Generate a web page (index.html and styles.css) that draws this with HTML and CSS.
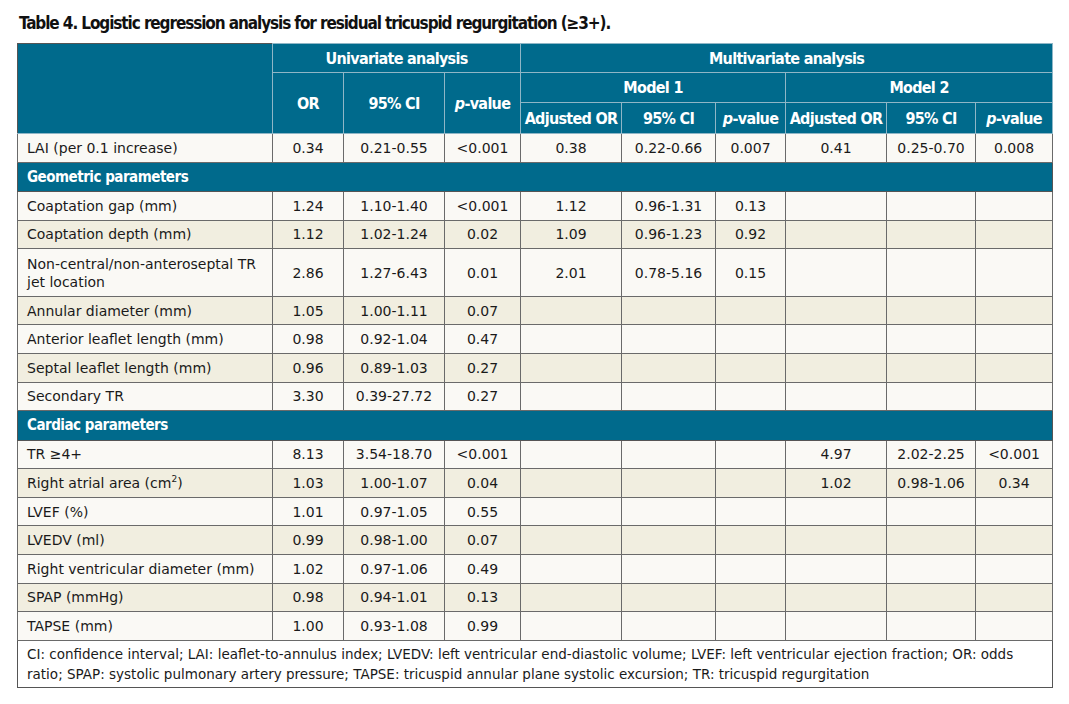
FILE: index.html
```html
<!DOCTYPE html>
<html>
<head>
<meta charset="utf-8">
<link rel="stylesheet" href="styles.css">
</head>
<body>
<div class="page">
  <h1 class="title">Table 4. Logistic regression analysis for residual tricuspid regurgitation (≥3+).</h1>
  <table class="tbl">
    <colgroup>
      <col class="c-label"><col class="c-or"><col class="c-ci"><col class="c-p">
      <col class="c-aor"><col class="c-ci2"><col class="c-p2">
      <col class="c-aor3"><col class="c-ci3"><col class="c-p3">
    </colgroup>
    <thead>
      <tr class="h1">
        <th rowspan="3"></th>
        <th colspan="3">Univariate analysis</th>
        <th colspan="6">Multivariate analysis</th>
      </tr>
      <tr class="h2">
        <th rowspan="2">OR</th>
        <th rowspan="2">95% CI</th>
        <th rowspan="2"><i>p</i>-value</th>
        <th colspan="3">Model 1</th>
        <th colspan="3">Model 2</th>
      </tr>
      <tr class="h3">
        <th>Adjusted OR</th><th>95% CI</th><th><i>p</i>-value</th>
        <th>Adjusted OR</th><th>95% CI</th><th><i>p</i>-value</th>
      </tr>
    </thead>
    <tbody>
      <tr class="odd"><td class="lbl">LAI (per 0.1 increase)</td><td>0.34</td><td>0.21-0.55</td><td>&lt;0.001</td><td>0.38</td><td>0.22-0.66</td><td>0.007</td><td>0.41</td><td>0.25-0.70</td><td>0.008</td></tr>
      <tr class="sec"><th colspan="10">Geometric parameters</th></tr>
      <tr class="odd"><td class="lbl">Coaptation gap (mm)</td><td>1.24</td><td>1.10-1.40</td><td>&lt;0.001</td><td>1.12</td><td>0.96-1.31</td><td>0.13</td><td></td><td></td><td></td></tr>
      <tr class="even"><td class="lbl">Coaptation depth (mm)</td><td>1.12</td><td>1.02-1.24</td><td>0.02</td><td>1.09</td><td>0.96-1.23</td><td>0.92</td><td></td><td></td><td></td></tr>
      <tr class="odd tall"><td class="lbl">Non-central/non-anteroseptal TR jet location</td><td>2.86</td><td>1.27-6.43</td><td>0.01</td><td>2.01</td><td>0.78-5.16</td><td>0.15</td><td></td><td></td><td></td></tr>
      <tr class="even"><td class="lbl">Annular diameter (mm)</td><td>1.05</td><td>1.00-1.11</td><td>0.07</td><td></td><td></td><td></td><td></td><td></td><td></td></tr>
      <tr class="odd"><td class="lbl">Anterior leaflet length (mm)</td><td>0.98</td><td>0.92-1.04</td><td>0.47</td><td></td><td></td><td></td><td></td><td></td><td></td></tr>
      <tr class="even"><td class="lbl">Septal leaflet length (mm)</td><td>0.96</td><td>0.89-1.03</td><td>0.27</td><td></td><td></td><td></td><td></td><td></td><td></td></tr>
      <tr class="odd"><td class="lbl">Secondary TR</td><td>3.30</td><td>0.39-27.72</td><td>0.27</td><td></td><td></td><td></td><td></td><td></td><td></td></tr>
      <tr class="sec"><th colspan="10">Cardiac parameters</th></tr>
      <tr class="odd"><td class="lbl">TR ≥4+</td><td>8.13</td><td>3.54-18.70</td><td>&lt;0.001</td><td></td><td></td><td></td><td>4.97</td><td>2.02-2.25</td><td>&lt;0.001</td></tr>
      <tr class="even"><td class="lbl">Right atrial area (cm<sup>2</sup>)</td><td>1.03</td><td>1.00-1.07</td><td>0.04</td><td></td><td></td><td></td><td>1.02</td><td>0.98-1.06</td><td>0.34</td></tr>
      <tr class="odd"><td class="lbl">LVEF (%)</td><td>1.01</td><td>0.97-1.05</td><td>0.55</td><td></td><td></td><td></td><td></td><td></td><td></td></tr>
      <tr class="even"><td class="lbl">LVEDV (ml)</td><td>0.99</td><td>0.98-1.00</td><td>0.07</td><td></td><td></td><td></td><td></td><td></td><td></td></tr>
      <tr class="odd"><td class="lbl">Right ventricular diameter (mm)</td><td>1.02</td><td>0.97-1.06</td><td>0.49</td><td></td><td></td><td></td><td></td><td></td><td></td></tr>
      <tr class="even"><td class="lbl">SPAP (mmHg)</td><td>0.98</td><td>0.94-1.01</td><td>0.13</td><td></td><td></td><td></td><td></td><td></td><td></td></tr>
      <tr class="odd"><td class="lbl">TAPSE (mm)</td><td>1.00</td><td>0.93-1.08</td><td>0.99</td><td></td><td></td><td></td><td></td><td></td><td></td></tr>
    </tbody>
    <tfoot>
      <tr class="foot"><td colspan="10">CI: confidence interval; LAI: leaflet-to-annulus index; LVEDV: left ventricular end-diastolic volume; LVEF: left ventricular ejection fraction; OR: odds ratio; SPAP: systolic pulmonary artery pressure; TAPSE: tricuspid annular plane systolic excursion; TR: tricuspid regurgitation</td></tr>
    </tfoot>
  </table>
</div>
</body>
</html>
```
FILE: styles.css
```css
html, body {
  margin: 0;
  padding: 0;
  background: #ffffff;
}
.page {
  padding: 12px 0 0 17px;
  font-family: "DejaVu Sans", Verdana, sans-serif;
  color: #1a1a1a;
}
.title {
  margin: 0 0 9px 2px;
  font-family: "DejaVu Sans Condensed", "DejaVu Sans", sans-serif;
  font-stretch: condensed;
  font-weight: bold;
  font-size: 17px;
  letter-spacing: -1.1px;
  line-height: 22px;
  color: #111;
}
.tbl {
  width: 1035px;
  table-layout: fixed;
  border-collapse: collapse;
  border: 1px solid #555;
  font-size: 14px;
}
.c-label { width: 255px; }
.c-or { width: 71px; }
.c-ci { width: 101px; }
.c-p { width: 76px; }
.c-aor { width: 101px; }
.c-ci2 { width: 94px; }
.c-p2 { width: 70px; }
.c-aor3 { width: 101px; }
.c-ci3 { width: 89px; }
.c-p3 { width: 77px; }

thead th {
  background: #006a8c;
  color: #fff;
  font-family: "DejaVu Sans Condensed", "DejaVu Sans", sans-serif;
  font-stretch: condensed;
  font-weight: bold;
  font-size: 16px;
  letter-spacing: -0.7px;
  border: 1px solid #8fb6c6;
  padding: 0 2px;
  text-align: center;
  white-space: nowrap;
}
thead th i { font-weight: bold; }
.h1 th { height: 28px; }
.h2 th { height: 29px; }
.h3 th { height: 30px; }
.h1 th:first-child { border-left-color: #555; border-top-color: #555; }

tbody td {
  border: 1px solid #6a6a6a;
  text-align: center;
  height: 27.6px;
  padding: 0 4px;
  white-space: nowrap;
}
tbody td.lbl {
  text-align: left;
  padding-left: 9px;
  white-space: normal;
  line-height: 18px;
}
.tall td { height: 46.5px; }
.odd td { background: #faf9f5; }
.even td { background: #f1eee0; }
sup { font-size: 9px; line-height: 0; vertical-align: 6px; }

.sec th {
  background: #006a8c;
  color: #fff;
  font-family: "DejaVu Sans Condensed", "DejaVu Sans", sans-serif;
  font-stretch: condensed;
  font-weight: bold;
  font-size: 15px;
  letter-spacing: -0.5px;
  text-align: left;
  padding: 0 9px;
  height: 28.5px;
  border: 1px solid #555;
}
.foot td {
  background: #fff;
  border: 1px solid #555;
  padding: 3px 9px 3px;
  line-height: 20px;
  font-size: 13.5px;
}
```
